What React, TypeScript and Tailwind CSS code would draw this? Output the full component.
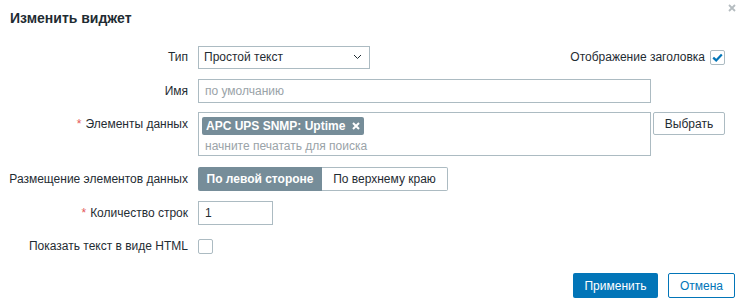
import React from "react";

function Check({ checked }: { checked?: boolean }) {
  return (
    <span className="inline-flex w-[15px] h-[15px] border border-[#acbbc2] rounded-[2px] bg-white items-center justify-center">
      {checked && (
        <svg width="11" height="9" viewBox="0 0 11 9">
          <path d="M1.2 4.6 L4.2 7.4 L9.8 1.4" fill="none" stroke="#0275b8" strokeWidth="2.2" />
        </svg>
      )}
    </span>
  );
}

function Label({ children, req }: { children: React.ReactNode; req?: boolean }) {
  return (
    <div className="w-[188px] shrink-0 text-right leading-[24px] whitespace-nowrap">
      {req && <span className="text-[#e45959] mr-[4px]">*</span>}
      {children}
    </div>
  );
}

export default function App() {
  return (
    <div className="w-[740px] h-[307px] bg-white relative font-['Liberation_Sans',Arial,sans-serif] text-[12px] text-[#1f2c33]">
      <div className="h-[36px] px-[10px] flex items-center">
        <h2 className="text-[14px] font-bold text-[#1f2c33]">Изменить виджет</h2>
      </div>
      <button className="absolute top-[3px] right-[3px] w-[10px] h-[10px] flex items-center justify-center">
        <svg width="8" height="8" viewBox="0 0 8 8">
          <path d="M1 1 L7 7 M7 1 L1 7" stroke="#b5bcc0" strokeWidth="1.8" />
        </svg>
      </button>

      <div className="flex flex-col">
        <div className="flex items-center mt-[9px] h-[24px]">
          <Label>Тип</Label>
          <div className="ml-[10px] w-[172px] h-[23px] border border-[#acbbc2] flex items-center justify-between pl-[5px] pr-[7px]">
            <span>Простой текст</span>
            <svg width="9" height="6" viewBox="0 0 9 6">
              <path d="M1 1 L4.5 4.5 L8 1" fill="none" stroke="#1f2c33" strokeWidth="1" />
            </svg>
          </div>
          <div className="ml-auto mr-[15px] flex items-center gap-[5px]">
            <span>Отображение заголовка</span>
            <Check checked />
          </div>
        </div>

        <div className="flex items-center mt-[10px] h-[24px]">
          <Label>Имя</Label>
          <div className="ml-[10px] w-[453px] h-[24px] border border-[#acbbc2] flex items-center px-[6px] text-[#9aa3a8]">
            по умолчанию
          </div>
        </div>

        <div className="flex items-start mt-[9px]">
          <Label req>Элементы данных</Label>
          <div className="ml-[10px] w-[453px] h-[44px] border border-[#acbbc2] flex flex-col pl-[3px] pt-[4px]">
            <span className="self-start h-[18px] bg-[#768d99] text-white font-bold rounded-[2px] px-[4px] flex items-center gap-[7px] leading-none">
              APC UPS SNMP: Uptime
              <svg width="8" height="8" viewBox="0 0 8 8">
                <path d="M1 1 L7 7 M7 1 L1 7" stroke="#ffffff" strokeWidth="2" />
              </svg>
            </span>
            <span className="text-[#9aa3a8] pl-[3px] mt-[3px] leading-[16px]">начните печатать для поиска</span>
          </div>
          <button className="ml-[2px] w-[72px] h-[23px] border border-[#acbbc2] rounded-[2px] bg-white text-[#1f2c33] flex items-center justify-center">
            Выбрать
          </button>
        </div>

        <div className="flex items-center mt-[11px] h-[24px]">
          <Label>Размещение элементов данных</Label>
          <div className="ml-[10px] flex h-[24px] w-[250px]">
            <div className="w-[124px] bg-[#768d99] text-white font-bold rounded-l-[2px] flex items-center justify-center">
              По левой стороне
            </div>
            <div className="flex-1 border border-l-0 border-[#acbbc2] rounded-r-[2px] flex items-center justify-center">
              По верхнему краю
            </div>
          </div>
        </div>

        <div className="flex items-center mt-[10px] h-[24px]">
          <Label req>Количество строк</Label>
          <div className="ml-[10px] w-[75px] h-[24px] border border-[#acbbc2] flex items-center px-[6px]">
            1
          </div>
        </div>

        <div className="flex items-center mt-[9px] h-[24px]">
          <Label>Показать текст в виде HTML</Label>
          <div className="ml-[10px] flex items-center">
            <Check />
          </div>
        </div>

        <div className="flex justify-end items-center gap-[10px] mt-[15px] pr-[5px]">
          <button className="w-[85px] h-[25px] bg-[#0275b8] text-white rounded-[2px] flex items-center justify-center">
            Применить
          </button>
          <button className="w-[67px] h-[25px] bg-white border border-[#0275b8] text-[#0275b8] rounded-[2px] flex items-center justify-center">
            Отмена
          </button>
        </div>
      </div>
    </div>
  );
}
